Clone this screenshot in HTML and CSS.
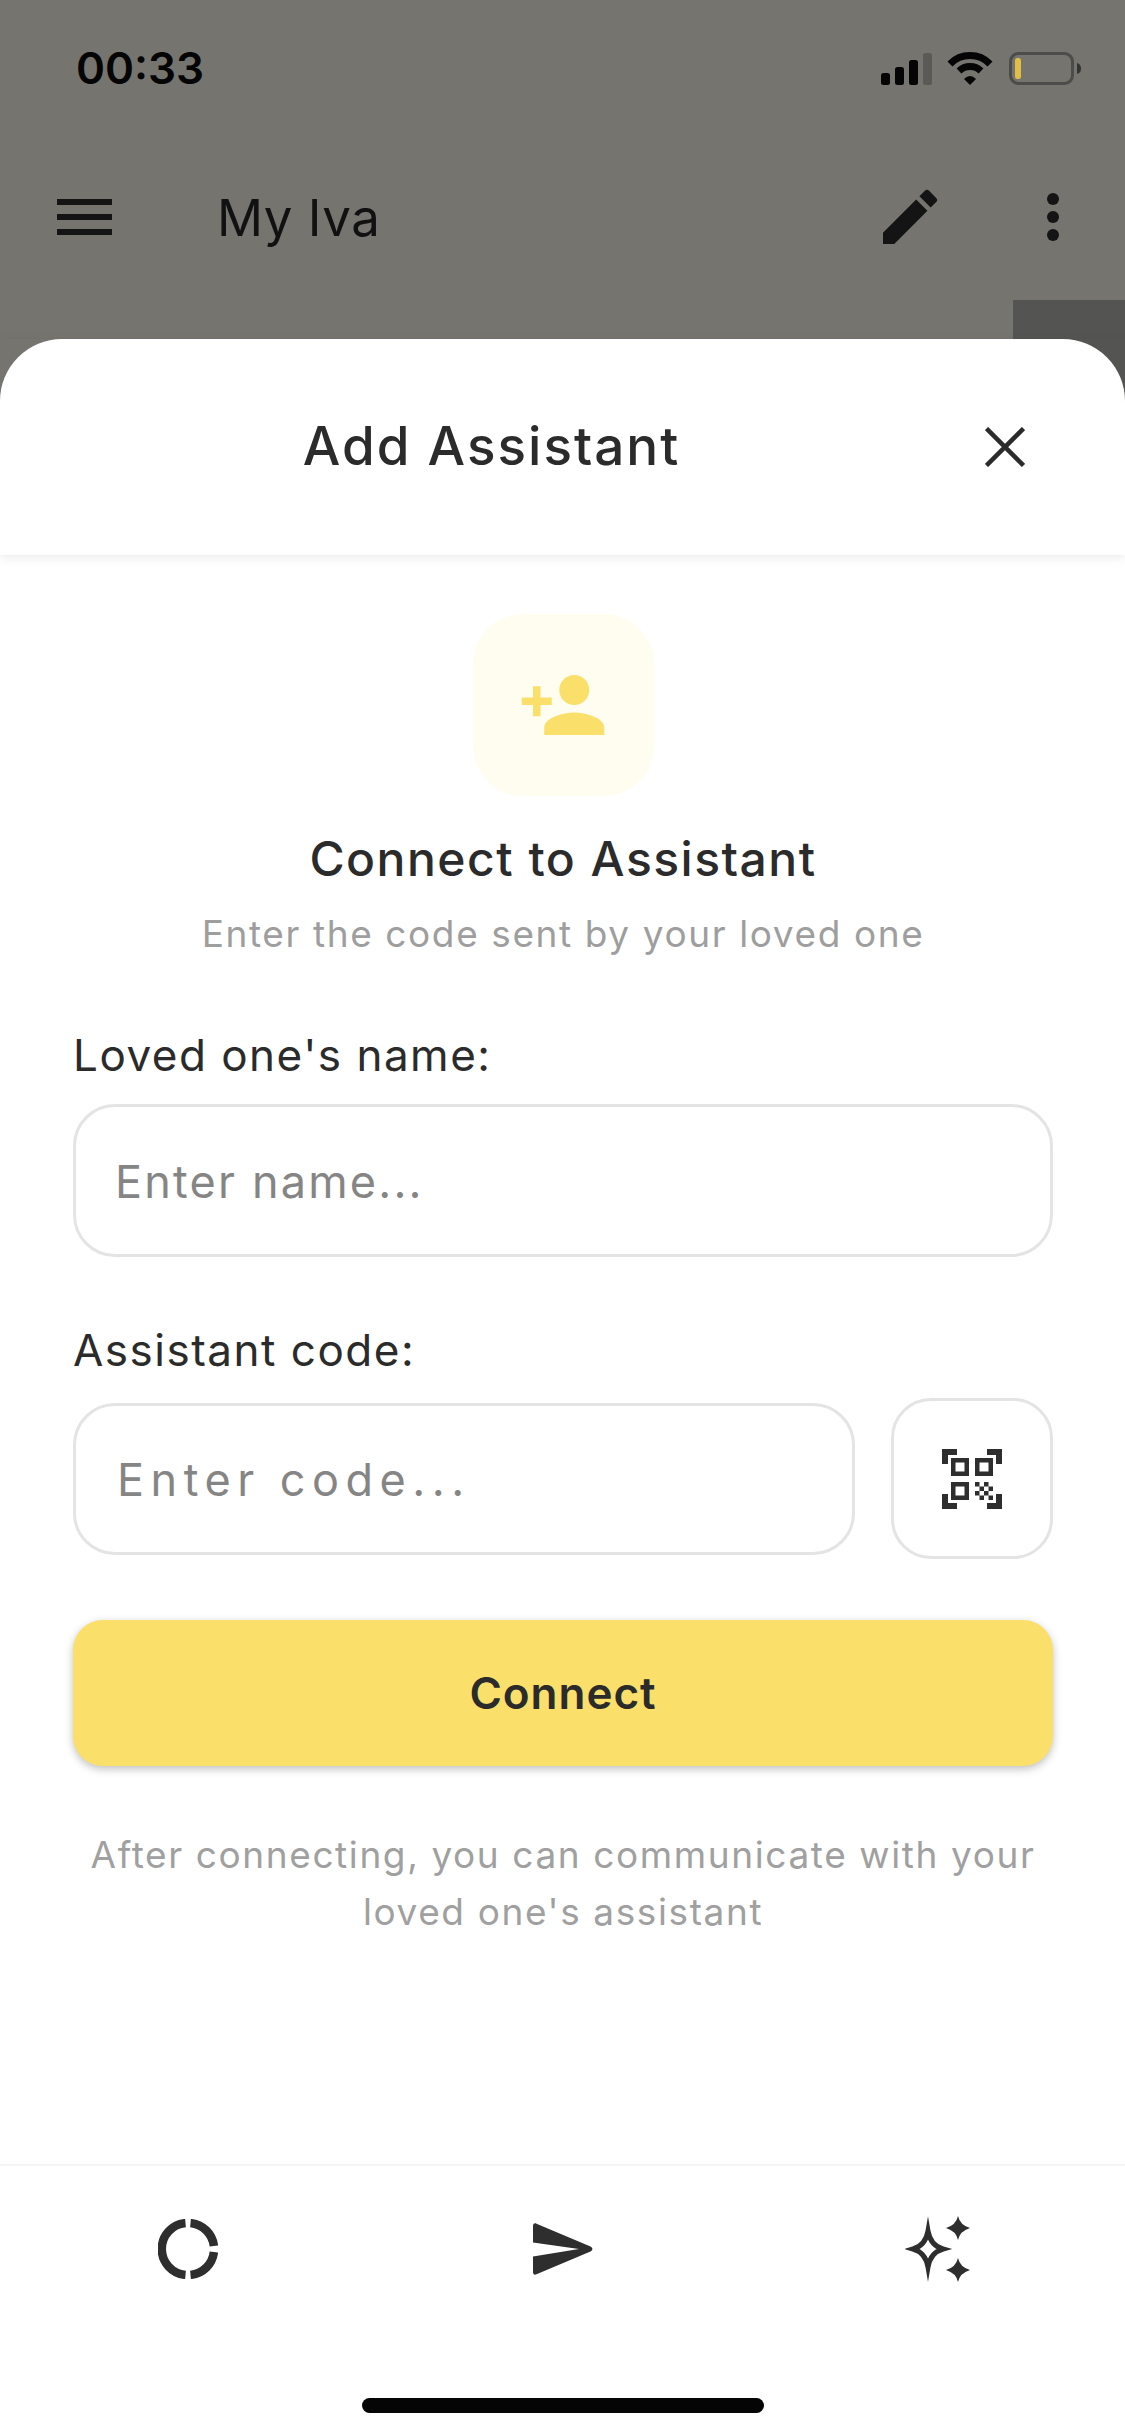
FILE: index.html
```html
<!DOCTYPE html>
<html lang="en">

<head>
  <title>Add Assistant</title>
  <meta charset="utf-8" />
  <meta name="viewport" content="width=device-width, initial-scale=1.0">
  <link rel="stylesheet" href="styles.css">
</head>

<body>
  <div class="appPage">
    <div class="backdrop">
      <div class="statusBar">
        <div class="time">00:33</div>
        <div class="statusIcons">
          <svg class="signalIcon" width="51" height="32" viewBox="0 0 51 32">
            <rect x="0" y="20" width="9" height="12" rx="2.5" fill="#050505" />
            <rect x="14" y="14" width="9" height="18" rx="2.5" fill="#050505" />
            <rect x="28" y="7" width="9" height="25" rx="2.5" fill="#050505" />
            <rect x="42" y="0" width="9" height="32" rx="2.5" fill="#5a5a57" />
          </svg>
          <svg class="wifiIcon" width="46" height="33" viewBox="0 0 46 33">
            <path d="M3 12A28 28 0 0 1 43 12" fill="none" stroke="#050505" stroke-width="7" />
            <path d="M12 19A16 16 0 0 1 34 19" fill="none" stroke="#050505" stroke-width="7" />
            <path d="M17 27Q23 21 29 27L23 33Z" fill="#050505" />
          </svg>
          <svg class="batteryIcon" width="72" height="33" viewBox="0 0 72 33">
            <rect x="1.5" y="1.5" width="62" height="30" rx="8" fill="none" stroke="#4c4c4a" stroke-width="3" />
            <rect x="6" y="6" width="6" height="21" rx="2.5" fill="#dfc044" />
            <path d="M68 11Q72 12 72 16.500Q72 21 68 22Z" fill="#333" />
          </svg>
        </div>
      </div>
      <div class="appBar">
        <div class="menuIcon"><span></span><span></span><span></span></div>
        <div class="appTitle">My Iva</div>
        <svg class="editIcon" width="72" height="72" viewBox="0 0 24 24">
          <path fill="#141414" d="M3 17.250V21h3.750L17.810 9.940l-3.750-3.750L3 17.250zM20.710 7.040a1 1 0 0 0 0-1.410l-2.340-2.340a1 1 0 0 0-1.410 0l-1.830 1.830 3.750 3.750 1.830-1.830z" />
        </svg>
        <svg class="moreIcon" width="12" height="48" viewBox="0 0 12 48">
          <circle cx="6" cy="6" r="6" fill="#141414" />
          <circle cx="6" cy="24" r="6" fill="#141414" />
          <circle cx="6" cy="42" r="6" fill="#141414" />
        </svg>
      </div>
      <div class="peekBlock"></div>
    </div>

    <div class="sheet">
      <div class="sheetHeader">
        <div class="sheetTitle">Add Assistant</div>
        <svg class="closeIcon" width="40" height="40" viewBox="0 0 40 40">
          <path d="M1.500 1.500L38.500 38.500M38.500 1.500L1.500 38.500" stroke="#2b2b2b" stroke-width="4.500" fill="none" />
        </svg>
      </div>

      <div class="sheetBody">
        <div class="iconBox">
          <svg width="90" height="90" viewBox="0 0 24 24">
            <path fill="#fae06a" d="M15 12c2.210 0 4-1.790 4-4s-1.790-4-4-4-4 1.790-4 4 1.790 4 4 4zm-9-2V7H4v3H1v2h3v3h2v-3h3v-2H6zm9 4c-2.670 0-8 1.340-8 4v2h16v-2c0-2.660-5.330-4-8-4z" />
          </svg>
        </div>
        <div class="heading">Connect to Assistant</div>
        <div class="subheading">Enter the code sent by your loved one</div>

        <div class="fieldLabel nameLabel">Loved one's name:</div>
        <div class="field nameField">Enter name...</div>

        <div class="fieldLabel codeLabel">Assistant code:</div>
        <div class="codeRow">
          <div class="field codeField">Enter code...</div>
          <div class="qrButton">
            <svg width="72" height="72" viewBox="0 0 24 24">
              <path fill="#2e2e2e" d="M9.500 6.500v3h-3v-3h3M11 5H5v6h6V5zm-1.500 9.500v3h-3v-3h3M11 13H5v6h6v-6zm6.500-6.500v3h-3v-3h3M19 5h-6v6h6V5zm-6 8h1.500v1.500H13V13zm1.500 1.500H16V16h-1.500v-1.500zM16 13h1.500v1.500H16V13zm-3 3h1.500v1.500H13V16zm1.500 1.500H16V19h-1.500v-1.500zM16 16h1.500v1.500H16V16zm1.500-1.500H19V16h-1.500v-1.500zm0 3H19V19h-1.500v-1.500zM22 7h-2V4h-3V2h5v5zm0 15v-5h-2v3h-3v2h5zM2 22h5v-2H4v-3H2v5zM2 2v5h2V4h3V2H2z" />
            </svg>
          </div>
        </div>

        <div class="connectButton">Connect</div>
        <div class="hint">After connecting, you can communicate with your loved one's assistant</div>
      </div>

      <div class="bottomNav">
        <div class="navItem">
          <svg width="60" height="60" viewBox="0 0 60 60" fill="none" stroke="#2e2e2e" stroke-width="8.500">
            <path d="M27.500 4.100A26 26 0 0 0 27.500 55.900" />
            <path d="M32.500 4.100A26 26 0 0 1 55.900 27" />
            <path d="M55.900 33A26 26 0 0 1 32.500 55.900" />
          </svg>
        </div>
        <div class="navItem">
          <svg width="60" height="52" viewBox="0 0 60 52">
            <path fill="#2e2e2e" d="M0 3C0 1 1.500 -.5 3.500 .8L57.500 23.500C60 24.800 60 27.200 57.500 28.500L3.500 51.200C1.500 52.500 0 51 0 49V33.500L46 26L0 19.500Z" />
          </svg>
        </div>
        <div class="navItem">
          <svg width="66" height="66" viewBox="0 0 66 66">
            <path fill="none" stroke="#2e2e2e" stroke-width="5" stroke-miterlimit="8" d="M23 15Q25.500 29.500 38 33Q25.500 36.500 23 51Q20.500 36.500 8 33Q20.500 29.500 23 15Z" />
            <path fill="#2e2e2e" d="M53 0Q55 9 65 12Q55 15 53 24Q51 15 41 12Q51 9 53 0Z" />
            <path fill="#2e2e2e" d="M53 42Q55 51 65 54Q55 57 53 66Q51 57 41 54Q51 51 53 42Z" />
          </svg>
        </div>
      </div>
      <div class="homeArea"><div class="homeBar"></div></div>
    </div>
  </div>
</body>

</html>
```

FILE: styles.css
```css
html,
body {
  height: 100%;
  margin: 0;
}

.appPage {
  width: 1125px;
  height: 2436px;
  display: flex;
  flex-direction: column;
  overflow: hidden;
  font-family: Inter, "Noto Sans", sans-serif;
  color: #2b2b2b;
  background-color: #75746f;
}

.backdrop {
  position: relative;
  height: 339px;
  flex: none;
  color: #111;
}

.peekBlock {
  position: absolute;
  right: 0;
  bottom: -60px;
  width: 112px;
  height: 99px;
  background-color: #545452;
}

.statusBar {
  height: 177px;
  padding: 52px 44px 0 76px;
  box-sizing: border-box;
  display: flex;
  justify-content: space-between;
  align-items: flex-start;
}

.time {
  font-size: 44px;
  line-height: 33px;
  font-weight: 600;
  color: #050505;
}

.statusIcons {
  display: flex;
  align-items: flex-start;
}

.signalIcon {
  margin-top: 1px;
  margin-right: 15px;
}

.wifiIcon {
  margin-right: 16px;
}

.appBar {
  height: 80px;
  padding: 0 66px 0 57px;
  display: flex;
  align-items: center;
}

.menuIcon {
  width: 55px;
  display: flex;
  flex-direction: column;
  gap: 9px;
}

.menuIcon span {
  height: 6px;
  background-color: #141414;
}

.appTitle {
  margin-left: 105px;
  flex: 1;
  font-size: 51px;
  letter-spacing: 0.5px;
}

.editIcon {
  margin-right: 101px;
}

.sheet {
  flex: 1;
  display: flex;
  flex-direction: column;
  position: relative;
  background-color: white;
  border-radius: 62px 62px 0 0;
}

.sheetHeader {
  height: 216px;
  flex: none;
  position: relative;
  display: flex;
  align-items: center;
  padding: 0 100px 0 0;
  box-shadow: 0 3px 10px rgba(0, 0, 0, 0.08);
}

.sheetTitle {
  flex: 1;
  padding: 0 2px 3px 0;
  text-align: center;
  font-size: 53px;
  font-weight: 500;
  letter-spacing: 2px;
}

.sheetBody {
  flex: 1;
  padding: 59px 72px 0 73px;
  display: flex;
  flex-direction: column;
}

.iconBox {
  width: 181px;
  height: 182px;
  margin: 0 auto;
  border-radius: 50px;
  background-color: #fffdf0;
  display: flex;
  align-items: center;
  justify-content: center;
}

.heading {
  margin-top: 35px;
  text-align: center;
  font-size: 48px;
  line-height: 56px;
  font-weight: 500;
  letter-spacing: 1.5px;
}

.subheading {
  margin-top: 24px;
  text-align: center;
  font-size: 37px;
  line-height: 46px;
  letter-spacing: 1.6px;
  color: #9e9e9e;
}

.fieldLabel {
  font-size: 44px;
  line-height: 50px;
  letter-spacing: 1.5px;
}

.nameLabel {
  margin-top: 73px;
}

.codeLabel {
  margin-top: 68px;
}

.field {
  height: 152px;
  box-sizing: border-box;
  display: flex;
  align-items: center;
  padding: 1px 0 0 39px;
  border: 3px solid #e4e4e4;
  border-radius: 42px;
  font-size: 45px;
  letter-spacing: 2.2px;
  color: #858585;
}

.nameField {
  margin-top: 24px;
  height: 153px;
}

.codeRow {
  margin-top: 23px;
  height: 161px;
  display: flex;
  align-items: center;
  justify-content: space-between;
}

.codeField {
  width: 782px;
  letter-spacing: 6.500px;
  padding-left: 41px;
}

.qrButton {
  width: 162px;
  height: 161px;
  box-sizing: border-box;
  border: 3px solid #e4e4e4;
  border-radius: 40px;
  display: flex;
  align-items: center;
  justify-content: center;
}

.connectButton {
  margin-top: 61px;
  height: 146px;
  display: flex;
  align-items: center;
  justify-content: center;
  border-radius: 30px;
  background-color: #fae06a;
  box-shadow: 0 3px 8px rgba(0, 0, 0, 0.25);
  font-size: 44px;
  font-weight: 600;
  letter-spacing: 1px;
}

.hint {
  margin-top: 60px;
  text-align: center;
  font-size: 37px;
  line-height: 57px;
  letter-spacing: 1.6px;
  color: #a0a0a0;
}

.bottomNav {
  flex: none;
  height: 170px;
  border-top: 2px solid #f5f5f5;
  display: grid;
  grid-template-columns: repeat(3, 1fr);
  align-items: center;
  justify-items: center;
}

.homeArea {
  flex: none;
  height: 100px;
  display: flex;
  justify-content: center;
}

.homeBar {
  margin-top: 62px;
  width: 402px;
  height: 15px;
  border-radius: 8px;
  background-color: #050505;
}
```
